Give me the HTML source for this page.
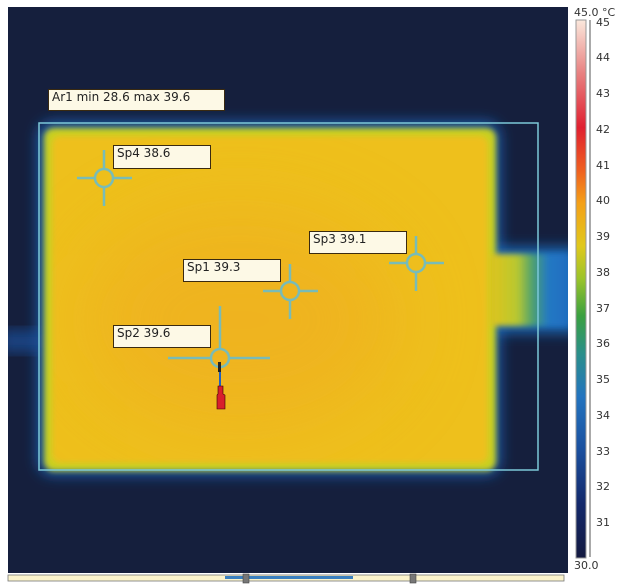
<!DOCTYPE html>
<html><head><meta charset="utf-8"><style>
html,body{margin:0;padding:0;background:#fff;width:640px;height:587px;overflow:hidden;font-family:"DejaVu Sans","Liberation Sans",sans-serif}
.lbl{position:absolute;background:#fdf9e6;border:1px solid #3a2a10;font-size:12px;color:#222;padding:0 0 0 3px;box-sizing:border-box;line-height:14px}
.t{position:absolute;left:596px;font-size:11px;color:#333}
</style></head><body>
<svg width="640" height="587" style="position:absolute;left:0;top:0">
<defs>
<clipPath id="cl"><rect x="8" y="7" width="560" height="566"/></clipPath>
<clipPath id="cp"><rect x="52" y="136" width="436" height="327" rx="8"/></clipPath>
<filter id="b1" x="-20%" y="-20%" width="140%" height="140%"><feGaussianBlur stdDeviation="7"/></filter>
<filter id="b2" x="-20%" y="-20%" width="140%" height="140%"><feGaussianBlur stdDeviation="3"/></filter>
<filter id="b3" filterUnits="userSpaceOnUse" x="0" y="0" width="600" height="600"><feGaussianBlur stdDeviation="40"/></filter>
<linearGradient id="tab" x1="0" y1="0" x2="1" y2="0">
<stop offset="0" stop-color="#e0c41c"/>
<stop offset="0.35" stop-color="#b8c830"/>
<stop offset="0.55" stop-color="#4aa070"/>
<stop offset="0.75" stop-color="#2378c4"/>
<stop offset="1" stop-color="#1f6ec0"/>
</linearGradient>
<linearGradient id="cb" x1="0" y1="1" x2="0" y2="0">
<stop offset="0" stop-color="#141a40"/>
<stop offset="0.1" stop-color="#13286a"/>
<stop offset="0.2" stop-color="#1a4f9e"/>
<stop offset="0.3" stop-color="#2374bf"/>
<stop offset="0.38" stop-color="#2a8f8a"/>
<stop offset="0.45" stop-color="#3aa040"/>
<stop offset="0.52" stop-color="#9cc42a"/>
<stop offset="0.58" stop-color="#e0c81c"/>
<stop offset="0.66" stop-color="#f4a018"/>
<stop offset="0.72" stop-color="#ef6020"/>
<stop offset="0.8" stop-color="#e02030"/>
<stop offset="0.9" stop-color="#e88080"/>
<stop offset="1" stop-color="#fbe8dc"/>
</linearGradient>
</defs>
<rect x="8" y="7" width="560" height="566" fill="#151f3d"/>
<g clip-path="url(#cl)">
<rect x="38" y="122" width="462" height="353" rx="14" fill="#1d5fb0" filter="url(#b1)"/>
<rect x="490" y="248" width="90" height="84" fill="#1f6ec0" filter="url(#b1)"/>
<rect x="0" y="330" width="46" height="22" fill="#1a52a0" filter="url(#b1)" opacity="0.7"/>
<rect x="44" y="128" width="452" height="343" rx="10" fill="#c8d020" filter="url(#b2)"/>
<rect x="490" y="254" width="78" height="72" fill="url(#tab)" filter="url(#b2)"/>
<rect x="52" y="136" width="436" height="327" rx="8" fill="#eec01c" filter="url(#b2)"/>
<g clip-path="url(#cp)"><ellipse cx="240" cy="320" rx="160" ry="110" fill="#f0aa20" filter="url(#b3)" opacity="0.55"/></g>
</g>
<rect x="39" y="123" width="499" height="347" fill="none" stroke="#7cc8d8" stroke-width="1.5"/>
<g stroke="#6cbcc8" stroke-width="2.5" fill="none" opacity="0.9">
<circle cx="104" cy="178" r="9"/><path d="M77 178h19M112 178h20M104 150v20M104 186v20"/>
<circle cx="220" cy="358" r="9"/><path d="M168 358h44M228 358h42M220 306v44"/>
<circle cx="290" cy="291" r="9"/><path d="M263 291h19M298 291h20M290 264v19M290 299v20"/>
<circle cx="416" cy="263" r="9"/><path d="M389 263h19M424 263h20M416 236v19M416 271v20"/>
</g>
<rect x="218" y="362" width="3" height="10" fill="#222"/>
<rect x="219" y="372" width="2" height="14" fill="#2060c0"/>
<path d="M218 386h5v8l2 1v14h-8v-14l1-1z" fill="#d8202c" stroke="#300" stroke-width="0.6"/>
<rect x="576" y="20" width="10" height="538" fill="url(#cb)" stroke="#999" stroke-width="1"/>
<line x1="590" y1="20" x2="590" y2="557" stroke="#555" stroke-width="1"/>
<rect x="8" y="575" width="556" height="6" fill="#fbf3cc" stroke="#777" stroke-width="0.8"/>
<rect x="225" y="576" width="128" height="3" fill="#3a80c0"/>
<rect x="243" y="574" width="6" height="9" fill="#777" stroke="#444" stroke-width="0.6"/>
<rect x="410" y="574" width="6" height="9" fill="#777" stroke="#444" stroke-width="0.6"/>
</svg>
<div class="lbl" style="left:48px;top:89px;width:177px;height:22px">Ar1 min 28.6 max 39.6</div>
<div class="lbl" style="left:113px;top:145px;width:98px;height:24px">Sp4 38.6</div>
<div class="lbl" style="left:309px;top:231px;width:98px;height:23px">Sp3 39.1</div>
<div class="lbl" style="left:183px;top:259px;width:98px;height:23px">Sp1 39.3</div>
<div class="lbl" style="left:113px;top:325px;width:98px;height:23px">Sp2 39.6</div>
<div style="position:absolute;left:574px;top:6px;font-size:11px;color:#333">45.0 °C</div>
<div style="position:absolute;left:574px;top:559px;font-size:11px;color:#333">30.0</div>
<div class="t" style="top:16px">45</div>
<div class="t" style="top:51px">44</div>
<div class="t" style="top:87px">43</div>
<div class="t" style="top:123px">42</div>
<div class="t" style="top:159px">41</div>
<div class="t" style="top:194px">40</div>
<div class="t" style="top:230px">39</div>
<div class="t" style="top:266px">38</div>
<div class="t" style="top:302px">37</div>
<div class="t" style="top:337px">36</div>
<div class="t" style="top:373px">35</div>
<div class="t" style="top:409px">34</div>
<div class="t" style="top:445px">33</div>
<div class="t" style="top:480px">32</div>
<div class="t" style="top:516px">31</div>
</body></html>
